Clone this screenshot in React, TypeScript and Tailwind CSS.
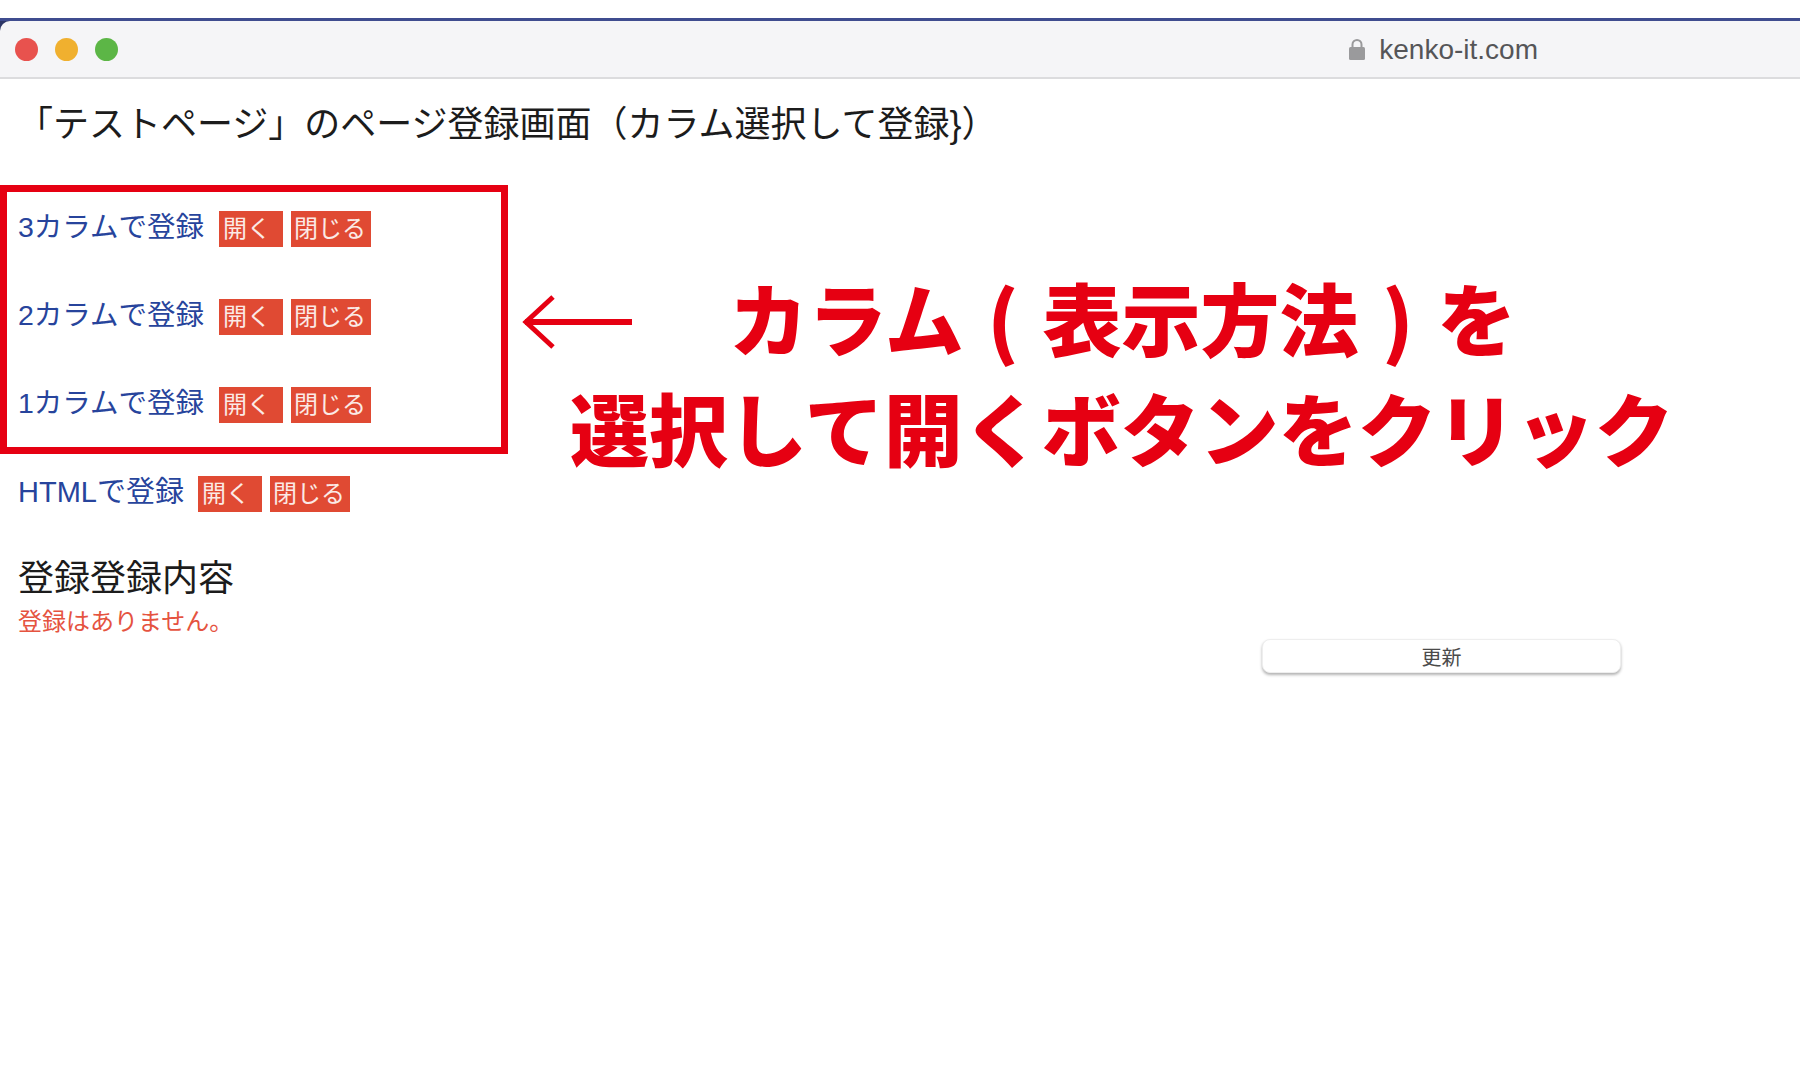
import React from 'react';

const SANS = "font-['Liberation_Sans','Noto_Sans_CJK_JP',sans-serif]";

const rows = ['3カラムで登録', '2カラムで登録', '1カラムで登録'];

const Buttons: React.FC = () => (
  <div className="flex gap-2">
    <span className="flex h-9 w-16 items-center bg-[#e04a33] pl-1 text-2xl leading-none text-[#fbeae6]">開く</span>
    <span className="flex h-9 w-20 items-center bg-[#e04a33] pl-[3px] text-2xl leading-none text-[#fbeae6]">閉じる</span>
  </div>
);

const ColumnRow: React.FC<{ label: string }> = ({ label }) => (
  <div className="flex h-9 items-center gap-4">
    <a className="-mt-[3px] w-[185px] whitespace-nowrap text-[28.5px] leading-none text-[#27449c]">{label}</a>
    <Buttons />
  </div>
);

const TrafficLights: React.FC = () => (
  <div className="flex gap-[17px] pl-[15px]">
    <span className="h-[23px] w-[23px] rounded-full bg-[#e8524e]" />
    <span className="h-[23px] w-[23px] rounded-full bg-[#f0b02f]" />
    <span className="h-[23px] w-[23px] rounded-full bg-[#5cb646]" />
  </div>
);

export default function App() {
  return (
    <div className={`h-[1088px] w-full overflow-hidden bg-white text-black ${SANS}`}>
      <div className="h-[18px]" />
      {/* browser chrome */}
      <div className="border-t-[3px] border-[#3f4c8f] bg-[#2c3566]">
        <div className="flex h-[58px] items-center justify-between rounded-tl-[10px] border-b-2 border-[#dcdcde] bg-[#f5f5f7] pr-[262px]">
          <TrafficLights />
          <div className="flex items-center gap-[14px]">
            <svg width="16" height="22" viewBox="0 0 16 22" className="-mt-px">
              <path d="M3.5 10V6.5a4.5 4.5 0 0 1 9 0V10" fill="none" stroke="#9a9a9c" strokeWidth="2" />
              <rect x="0" y="9" width="16" height="13" rx="1.5" fill="#9a9a9c" />
            </svg>
            <span className="mt-px text-[28px] leading-none text-[#555558]">kenko-it.com</span>
          </div>
        </div>
      </div>

      <h1 className="mt-[26px] pl-[17px] text-[36px] font-normal leading-10 whitespace-nowrap text-[#1c1c1c]">
        「テストページ」のページ登録画面（カラム選択して登録{'}'}）
      </h1>

      <div className="mt-[40px] flex h-[269px]">
        <div className="flex h-[269px] w-[508px] shrink-0 flex-col gap-[52px] border-[7px] border-[#e60012] pt-[19px] pl-[11px]">
          {rows.map((r) => (
            <ColumnRow key={r} label={r} />
          ))}
        </div>

        <div className="flex items-start">
          <svg width="120" height="60" viewBox="0 0 120 60" className="mt-[107px] ml-[12px] shrink-0">
            <path d="M112 30H5" fill="none" stroke="#e60012" strokeWidth="6" />
            <path d="M33 5 6 30 33 55" fill="none" stroke="#e60012" strokeWidth="5" />
          </svg>
          <div className="-ml-[70px] font-['Noto_Sans_CJK_JP',sans-serif] text-[79px] leading-[110px] font-black whitespace-nowrap text-[#e60012]">
            <div className="mt-[77px] pl-[159px] [word-spacing:5.5px]">カラム ( 表示方法 ) を</div>
            <div>選択して開くボタンをクリック</div>
          </div>
        </div>
      </div>

      <div className="mt-[22px] flex h-9 items-center gap-[13px] pl-[18px]">
        <a className="-mt-[3px] w-[167px] text-[29px] leading-none whitespace-nowrap text-[#27449c]">HTMLで登録</a>
        <Buttons />
      </div>

      <h2 className="mt-[47px] pl-[18px] text-4xl font-normal leading-10 text-[#1c1c1c]">登録登録内容</h2>
      <p className="mt-[7px] pl-[18px] text-2xl leading-8 text-[#e5533f]">登録はありません。</p>

      <div className="mt-px flex justify-end pr-[179px]">
        <button className="h-[34px] w-[359px] rounded-lg border border-[#eeeeee] bg-white pt-1 text-xl leading-none text-[#4a4a4a] shadow-[0_2px_3px_rgba(0,0,0,0.3)]">
          更新
        </button>
      </div>
    </div>
  );
}
